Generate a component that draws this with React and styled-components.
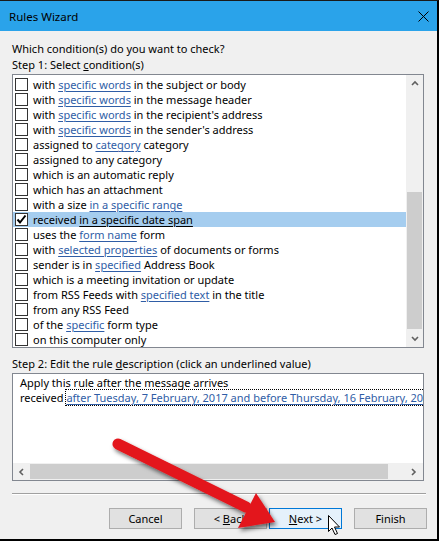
import React from "react";
import styled, { createGlobalStyle } from "styled-components";

const GlobalStyle = createGlobalStyle`
  html, body {
    margin : 0;
    padding : 0;
    background : #f0f0f0;
  }
  body {
    font-family : "Noto Sans", "Liberation Sans", sans-serif;
    font-size : 11px;
    color : #000;
  }
`

const Window = styled.div`
  position : relative;
  width : 439px;
  height : 541px;
  box-sizing : border-box;
  border-top : 1px solid #1a1a1a;
  border-right : 2px solid #000;
  border-bottom : 2px solid #000;
  background : #f0f0f0;
  display : flex;
  flex-direction : column;
  overflow : hidden;
`

const TitleBar = styled.div`
  height : 30px;
  background : #2aa3ea;
  display : flex;
  align-items : center;
  justify-content : space-between;
  padding : 0 8px 0 9px;
  font-size : 11.5px;
  color : #000;
`

const Body = styled.div`
  flex : 1;
  display : flex;
  flex-direction : column;
  padding : 10px 13px 0 12px;
`

const Label = styled.div`
  height : 16px;
  line-height : 16px;
  white-space : nowrap;
  margin-top : ${p => p.$top || 0}px;
`

const Key = styled.span`
  text-decoration : underline;
`

const Box = styled.div`
  border : 1px solid #828790;
  background : #fff;
  box-sizing : border-box;
  height : ${p => p.$h}px;
  display : flex;
  flex-direction : ${p => p.$dir || "row"};
  margin-top : ${p => p.$top || 0}px;
  overflow : hidden;
`

const RowList = styled.div`
  flex : 1;
  padding-top : 2px;
  min-width : 0;
`

const Row = styled.div`
  height : 15px;
  display : flex;
  align-items : center;
  padding-left : 2px;
  background : ${p => p.$selected ? "#a5cdef" : "transparent"};
  white-space : nowrap;
`

const Check = styled.span`
  width : 13px;
  height : 13px;
  box-sizing : border-box;
  border : 1px solid #333;
  background : #fff;
  margin-right : 5px;
  flex-shrink : 0;
  display : flex;
  align-items : center;
  justify-content : center;
`

const Link = styled.span`
  color : ${p => p.$dark ? "#000" : "#2f5da6"};
  text-decoration : underline;
  text-underline-offset : 2px;
`

const VScroll = styled.div`
  width : 17px;
  background : #f0f0f0;
  display : flex;
  flex-direction : column;
  align-items : center;
`

const ArrowBtn = styled.div`
  width : 17px;
  height : 17px;
  display : flex;
  align-items : center;
  justify-content : center;
  flex-shrink : 0;
`

const VTrack = styled.div`
  flex : 1;
  width : 100%;
  padding-top : ${p => p.$top}px;
  box-sizing : border-box;
`

const VThumb = styled.div`
  width : 15px;
  margin-left : 1px;
  height : ${p => p.$h}px;
  background : #cdcdcd;
`

const DescText = styled.div`
  flex : 1;
  padding : 1px 0 0 7px;
  overflow : hidden;
`

const DescLine = styled.div`
  height : 15px;
  line-height : 15px;
  white-space : nowrap;
`

const Focus = styled.span`
  outline : 1px dotted #000;
  outline-offset : 0px;
  margin-left : 3px;
`

const HScroll = styled.div`
  height : 17px;
  background : #f0f0f0;
  display : flex;
  align-items : center;
`

const HThumb = styled.div`
  flex : 1;
  height : 15px;
  background : #cdcdcd;
  margin-right : 17px;
  max-width : 358px;
`

const Separator = styled.div`
  height : 1px;
  background : #a0a0a0;
  border-bottom : 1px solid #fff;
  margin : 12px -2px 0 0;
`

const ButtonRow = styled.div`
  display : flex;
  justify-content : flex-end;
  margin : 13px -3px 0 0;
`

const Button = styled.div`
  width : 73px;
  height : 21px;
  box-sizing : border-box;
  border : 1px solid ${p => p.$focus ? "#0078d7" : "#adadad"};
  background : ${p => p.$focus ? "#e5f1fb" : "#e1e1e1"};
  display : flex;
  align-items : center;
  justify-content : center;
  margin-left : ${p => p.$gap}px;
  white-space : pre;
`

const Overlay = styled.svg`
  position : absolute;
  left : 0;
  top : 0;
  pointer-events : none;
`

const conditions = [
  { pre: "with ", link: "specific words", post: " in the subject or body" },
  { pre: "with ", link: "specific words", post: " in the message header" },
  { pre: "with ", link: "specific words", post: " in the recipient's address" },
  { pre: "with ", link: "specific words", post: " in the sender's address" },
  { pre: "assigned to ", link: "category", post: " category" },
  { pre: "assigned to any category" },
  { pre: "which is an automatic reply" },
  { pre: "which has an attachment" },
  { pre: "with a size ", link: "in a specific range" },
  { pre: "received ", link: "in a specific date span", checked: true },
  { pre: "uses the ", link: "form name", post: " form" },
  { pre: "with ", link: "selected properties", post: " of documents or forms" },
  { pre: "sender is in ", link: "specified", post: " Address Book" },
  { pre: "which is a meeting invitation or update" },
  { pre: "from RSS Feeds with ", link: "specified text", post: " in the title" },
  { pre: "from any RSS Feed" },
  { pre: "of the ", link: "specific", post: " form type" },
  { pre: "on this computer only" },
];

function Chevron({ dir }) {
  const pts = {
    up: "1,5 4,2 7,5",
    down: "1,2 4,5 7,2",
    left: "5,1 2,4 5,7",
    right: "2,1 5,4 2,7",
  }[dir];
  return (
    <svg width="8" height="8" viewBox="0 0 8 8">
      <polyline points={pts} fill="none" stroke="#606060" strokeWidth="1.6" />
    </svg>
  );
}

function App() {
  return (
    <Window>
      <GlobalStyle />
      <TitleBar>
        <span>Rules Wizard</span>
        <svg width="11" height="11" viewBox="0 0 11 11">
          <path d="M0.5 0.5 L10.5 10.5 M10.5 0.5 L0.5 10.5" stroke="#000" strokeWidth="1" />
        </svg>
      </TitleBar>
      <Body>
        <Label>Which condition(s) do you want to check?</Label>
        <Label>Step 1: Select <Key>c</Key>ondition(s)</Label>
        <Box $h={274} $top={1}>
          <RowList>
            {conditions.map((c, i) => (
              <Row key={i} $selected={c.checked}>
                <Check>
                  {c.checked && (
                    <svg width="11" height="11" viewBox="0 0 11 11">
                      <path d="M1.5 5.5 L4 8.5 L9.5 1.5" fill="none" stroke="#000" strokeWidth="2" />
                    </svg>
                  )}
                </Check>
                <span>
                  {c.pre}
                  {c.link && <Link $dark={c.checked}>{c.link}</Link>}
                  {c.post}
                </span>
              </Row>
            ))}
          </RowList>
          <VScroll>
            <ArrowBtn><Chevron dir="up" /></ArrowBtn>
            <VTrack $top={100}>
              <VThumb $h={137} />
            </VTrack>
            <ArrowBtn><Chevron dir="down" /></ArrowBtn>
          </VScroll>
        </Box>
        <Label $top={8}>Step 2: Edit the rule <Key>d</Key>escription (click an underlined value)</Label>
        <Box $h={108} $top={1} $dir="column">
          <DescText>
            <DescLine>Apply this rule after the message arrives</DescLine>
            <DescLine>
              received
              <Focus>
                <Link>after Tuesday, 7 February, 2017 and before Thursday, 16 February, 2017</Link>
              </Focus>
            </DescLine>
          </DescText>
          <HScroll>
            <ArrowBtn><Chevron dir="left" /></ArrowBtn>
            <HThumb />
            <ArrowBtn><Chevron dir="right" /></ArrowBtn>
          </HScroll>
        </Box>
        <Separator />
        <ButtonRow>
          <Button $gap={0}><span>Cancel</span></Button>
          <Button $gap={12}><span>&lt; <Key>B</Key>ack</span></Button>
          <Button $gap={2} $focus><span><Key>N</Key>ext &gt;</span></Button>
          <Button $gap={12}><span>Finish</span></Button>
        </ButtonRow>
      </Body>
      <Overlay width="439" height="541" viewBox="0 0 439 541">
        <defs>
          <filter id="shadow" x="-20%" y="-20%" width="140%" height="140%">
            <feDropShadow dx="2" dy="3" stdDeviation="2" floodColor="#000" floodOpacity="0.55" />
          </filter>
        </defs>
        <g filter="url(#shadow)">
          <line x1="118" y1="443" x2="246" y2="506" stroke="#e3141b" strokeWidth="11" strokeLinecap="round" />
          <polygon points="275,521 256,492 238,527" fill="#e3141b" />
        </g>
        <path
          d="M328.5 514.5 L328.5 530.5 L332 527 L335 533.5 L337.5 532.5 L334.5 526 L339.5 526 Z"
          fill="#fff"
          stroke="#000"
          strokeWidth="1"
          strokeLinejoin="miter"
        />
      </Overlay>
    </Window>
  );
}

export default App;
